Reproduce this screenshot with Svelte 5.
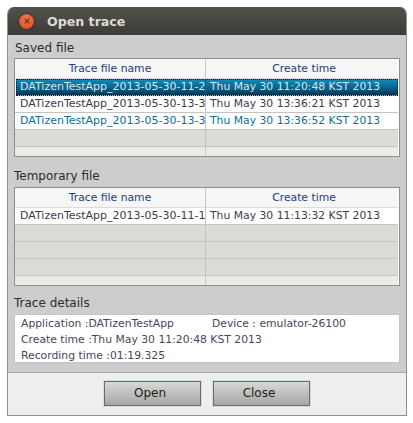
<script>
	const savedRows = [
		{ name: 'DATizenTestApp_2013-05-30-11-20-48', time: 'Thu May 30 11:20:48 KST 2013', kind: 'selected' },
		{ name: 'DATizenTestApp_2013-05-30-13-36-21', time: 'Thu May 30 13:36:21 KST 2013', kind: '' },
		{ name: 'DATizenTestApp_2013-05-30-13-36-52', time: 'Thu May 30 13:36:52 KST 2013', kind: 'link' }
	];
	const tempRows = [
		{ name: 'DATizenTestApp_2013-05-30-11-13-32', time: 'Thu May 30 11:13:32 KST 2013', kind: '' }
	];
	const slots = (rows) => [...rows, ...Array(4 - rows.length).fill(null)];
</script>

{#snippet traceTable(rows)}
	<div class="table">
		<div class="row head">
			<div class="cell">Trace file name</div>
			<div class="cell">Create time</div>
		</div>
		{#each slots(rows) as row}
			{#if row}
				<div class="row {row.kind}">
					<div class="cell name">{row.name}</div>
					<div class="cell">{row.time}</div>
				</div>
			{:else}
				<div class="row empty">
					<div class="cell"></div>
					<div class="cell"></div>
				</div>
			{/if}
		{/each}
		<div class="row stub">
			<div class="cell"></div>
			<div class="cell"></div>
		</div>
	</div>
{/snippet}

<div class="page">
	<div class="window">
		<header class="titlebar">
			<span class="close-dot">
				<svg width="6" height="6" viewBox="0 0 6 6"><path d="M.7.7l4.6 4.6M5.3.7L.7 5.3" stroke="#6e2a12" stroke-width="1.2" /></svg>
			</span>
			<span class="title">Open trace</span>
		</header>

		<main class="content">
			<section class="saved">
				<h2>Saved file</h2>
				{@render traceTable(savedRows)}
			</section>
			<section class="temp">
				<h2>Temporary file</h2>
				{@render traceTable(tempRows)}
			</section>
			<section class="details-section">
				<h2>Trace details</h2>
				<div class="details">
					<div class="line app">
						<span class="app-name">Application :DATizenTestApp</span>
						<span>Device : emulator-26100</span>
					</div>
					<div class="line">Create time :Thu May 30 11:20:48 KST 2013</div>
					<div class="line">Recording time :01:19.325</div>
				</div>
			</section>
		</main>

		<footer class="actions">
			<button>Open</button>
			<button>Close</button>
		</footer>
	</div>
</div>

<style>
	:global(body) {
		background: #fff;
	}

	.page {
		width: 413px;
		height: 423px;
		padding: 7px 6px 7px 7px;
		box-sizing: border-box;
		font-family: 'DejaVu Sans', sans-serif;
		font-size: 10.8px;
	}

	.window {
		height: 100%;
		display: flex;
		flex-direction: column;
		box-sizing: border-box;
		border: 1px solid #8f8e88;
		border-top: none;
		border-radius: 7px 7px 0 0;
		overflow: hidden;
	}

	.titlebar {
		height: 28px;
		margin: 0 -1px;
		flex: none;
		display: flex;
		align-items: center;
		gap: 13px;
		padding-left: 12px;
		background: linear-gradient(#53524c, #3c3b37);
	}

	.close-dot {
		width: 15px;
		height: 15px;
		border-radius: 50%;
		display: flex;
		align-items: center;
		justify-content: center;
		background: radial-gradient(circle at 50% 35%, #ee7a4d, #d9481c);
		box-shadow: 0 0 0 1px #33322e;
	}

	.title {
		color: #dfdbd2;
		font-size: 12.6px;
		font-weight: bold;
	}

	.content {
		flex: 1;
		background: #cdcdcd;
		padding: 5px 6px 0 6px;
		display: flex;
		flex-direction: column;
		border-bottom: 1px solid #a9a9a6;
	}

	h2 {
		margin: 0;
		font-size: 12px;
		font-weight: normal;
		line-height: 16px;
		color: #2c2c2c;
	}

	.saved {
		height: 128px;
	}

	.saved h2 {
		padding-left: 1px;
	}

	.temp {
		height: 127px;
	}

	.table {
		height: 99px;
		box-sizing: border-box;
		border: 1px solid #8f8f8a;
		padding: 0 1px 0 0;
		background: #fff;
		overflow: hidden;
	}

	.saved .table {
		margin-top: 2px;
	}

	.temp .table {
		margin-top: 3px;
	}

	.row {
		display: grid;
		grid-template-columns: 191px 1fr;
		height: 17px;
		box-sizing: border-box;
		border-bottom: 1px solid #c4c4c0;
		line-height: 16px;
		color: #3c3c46;
	}

	.cell {
		padding-left: 4px;
		white-space: nowrap;
		overflow: hidden;
		border-right: 1px solid #c4c4c0;
	}

	.cell:last-child {
		border-right: none;
	}

	.cell.name {
		padding-left: 5px;
		font-size: 11px;
	}

	.head {
		height: 20px;
		line-height: 19px;
		background: #f6f6f6;
		color: #1f3d78;
		border-bottom: 1px solid #dcdcdc;
		text-align: center;
	}

	.head .cell {
		padding: 0;
	}

	.head .cell:last-child {
		padding-left: 4px;
	}

	.selected {
		grid-template-columns: 190px 1fr;
		background: linear-gradient(#0f8fbc, #0b5f86 60%, #06344e);
		color: #d7e6ee;
		outline: 1px dotted #111;
		outline-offset: -1px;
		margin-left: 1px;
	}

	.selected .cell {
		border-right-color: #0b5f86;
	}

	.selected .cell.name {
		padding-left: 4px;
	}

	.link {
		color: #0c6f97;
	}

	.empty {
		background: #dcdbd6;
	}

	.stub {
		background: #ecebe7;
	}

	.details-section {
		flex: 1;
	}

	.details {
		height: 49px;
		margin-top: 3px;
		box-sizing: border-box;
		background: #fff;
		border: 1px solid #c4c4c4;
		padding: 1px 6px 0;
		line-height: 16px;
		color: #46465a;
	}

	.line {
		white-space: nowrap;
	}

	.app {
		display: flex;
	}

	.app-name {
		width: 191px;
	}

	.actions {
		height: 42px;
		flex: none;
		box-sizing: border-box;
		padding-bottom: 2px;
		background: #eeeeec;
		display: flex;
		justify-content: center;
		align-items: center;
		gap: 12px;
	}

	button {
		width: 97px;
		height: 25px;
		font: 12px 'DejaVu Sans', sans-serif;
		color: #1c1c1c;
		background: linear-gradient(#d8d8d6, #a6a6a4);
		border: 1px solid #5f6f70;
		box-shadow: 0 0 0 1px #cfe0e0;
		padding: 0 5px 0 0;
	}
</style>
